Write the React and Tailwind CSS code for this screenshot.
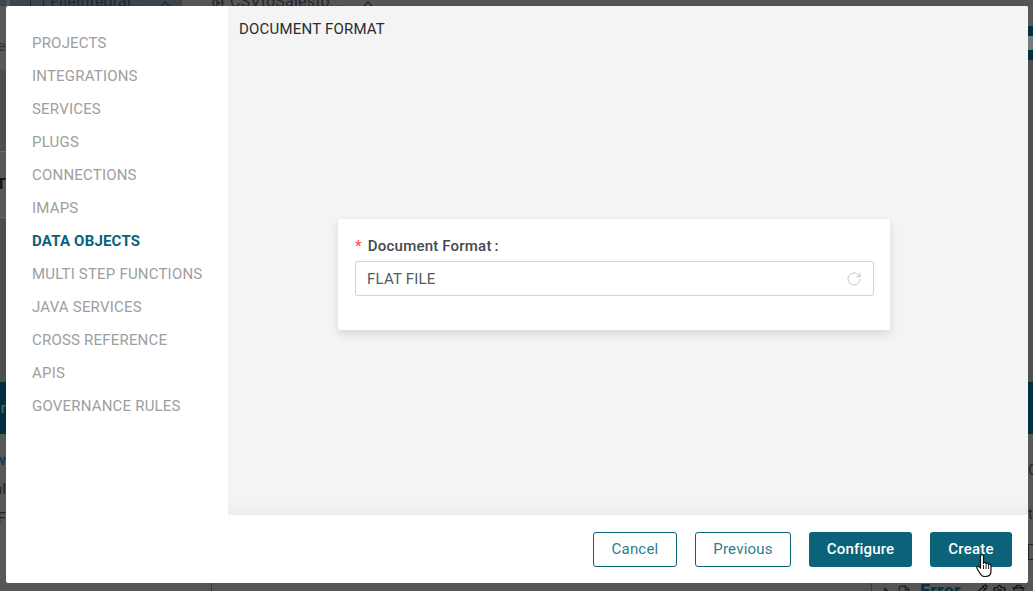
import React from 'react';
import { RotateCw, ChevronUp, Trash2, Settings, Pencil, File, Cog } from 'lucide-react';

const navItems = [
    'PROJECTS', 'INTEGRATIONS', 'SERVICES', 'PLUGS', 'CONNECTIONS', 'IMAPS',
    'DATA OBJECTS', 'MULTI STEP FUNCTIONS', 'JAVA SERVICES', 'CROSS REFERENCE', 'APIS', 'GOVERNANCE RULES',
];

const HandCursor = () => (
    <svg width="18" height="26" viewBox="0 0 18 26" className="absolute left-[975px] top-[553px]">
        <path
            d="M5.5 15V3.2c0-2 3-2 3 0V10.5c0-1.6 2.6-1.6 2.6 0v.8c0-1.5 2.5-1.5 2.5.1v.8c0-1.4 2.4-1.3 2.4.4v5.4c0 2.9-1.8 5.5-5.5 5.5H9.8c-2.4 0-3.5-1-4.6-2.8L2 15.5c-1-1.7 1.2-3 2.4-1.6z"
            fill="#fff"
            stroke="#111"
            strokeWidth="1.2"
            strokeLinejoin="round"
        />
        <path d="M8.5 12v4M11.1 12v4M13.6 12.5V16" stroke="#111" strokeWidth="0.9" />
    </svg>
);

const App = () => {
    return (
        <div className="relative h-[591px] w-[1033px] overflow-hidden bg-[#575757] font-['Roboto',sans-serif] text-[15px] tracking-[0.2px]">
            {/* Dimmed page behind the dialog */}
            <div className="flex h-full flex-col">
                <div className="flex h-[6px] overflow-hidden bg-[#555555] text-[16px] text-[#22272f]">
                    <div className="h-full w-[6px] bg-[#3c4653]" />
                    <div className="ml-[4px] flex h-full w-[172px] items-end bg-[#3d4450] pl-[20px]">
                        <span className="mb-[-3px] h-[12px] w-[14px] shrink-0 border border-[#22272f]" />
                        <span className="mb-[-4px] ml-[6px] leading-[16px] whitespace-nowrap">FileIntegral...</span>
                        <ChevronUp size={16} className="mb-[-6px] ml-[13px] shrink-0" />
                    </div>
                    <div className="ml-[29px] flex h-full items-end">
                        <Cog size={14} className="mb-[-4px] shrink-0" />
                        <span className="mb-[-4px] ml-[5px] leading-[16px] whitespace-nowrap">CSVtoSalesto...</span>
                        <ChevronUp size={16} className="mb-[-6px] ml-[17px] shrink-0" />
                    </div>
                </div>
                <div className="flex flex-1 justify-between">
                    {/* left edge */}
                    <div className="flex w-[6px] flex-col overflow-hidden whitespace-nowrap text-[#222]">
                        <div className="flex h-[64px] items-center justify-end bg-[#595959] pt-[16px] text-[#333]">e</div>
                        <div className="h-[82px] border-b border-[#6a6a6a] bg-[#4d4e50]" />
                        <div className="flex h-[66px] items-center justify-end border-b border-[#6a6a6a] bg-[#595959] font-bold text-[#111]">T</div>
                        <div className="h-[164px] bg-[#4d4e50]" />
                        <div className="flex h-[52px] items-center justify-end bg-[#03303e] text-[#5b7178]">ar</div>
                        <div className="flex h-[149px] flex-col items-end bg-[#585858] pt-[12px] leading-[29px]">
                            <span className="font-bold text-[#07414f]">w</span>
                            <span>nl</span>
                            <span>-F</span>
                        </div>
                    </div>
                    {/* right edge */}
                    <div className="flex w-[5px] flex-col overflow-hidden text-[#222]">
                        <div className="h-[20px] bg-[#585858]" />
                        <div className="flex h-[34px] items-center bg-[#03303e]">
                            <div className="h-[14px] w-[5px] bg-[#6f7d80]" />
                        </div>
                        <div className="h-[322px] bg-[#4f4f4f]" />
                        <div className="h-[52px] bg-[#03303e]" />
                        <div className="flex h-[149px] flex-col bg-[#585858] pt-[14px] leading-[44px]">
                            <span>C</span>
                            <span>t</span>
                            <div className="mt-[8px] h-[16px] w-[8px] border border-[#222]" />
                        </div>
                    </div>
                </div>
                <div className="flex h-[8px] items-start overflow-hidden bg-[#555555] pl-[211px] text-[#07313d]">
                    <div className="h-full w-px bg-[#3b3b3b]" />
                    <div className="ml-[659px] h-full w-px bg-[#3b3b3b]" />
                    <div className="mt-[4px] ml-[12px] h-0 w-0 shrink-0 border-y-[4px] border-l-[5px] border-y-transparent border-l-[#222]" />
                    <File size={14} className="mt-[2px] ml-[8px] shrink-0 text-[#222]" />
                    <span className="ml-[9px] text-[18px] leading-[16px] font-bold">Error</span>
                    <Pencil size={14} className="mt-[1px] ml-[13px] shrink-0 text-[#111]" />
                    <Settings size={15} className="mt-[1px] ml-[4px] shrink-0 text-[#111]" />
                    <Trash2 size={15} className="mt-[1px] ml-[4px] shrink-0 text-[#111]" />
                </div>
            </div>

            {/* Dialog */}
            <div className="absolute top-[6px] left-[6px] flex h-[577px] w-[1022px] overflow-hidden rounded-[2px] bg-white">
                <nav className="w-[222px] shrink-0 pt-[21px] pl-[26px] leading-[33px] text-[#9e9e9e]">
                    {navItems.map((item) => (
                        <div key={item} className={item === 'DATA OBJECTS' ? 'font-bold text-[#0a6379]' : ''}>
                            {item}
                        </div>
                    ))}
                </nav>
                <div className="flex min-w-0 flex-1 flex-col">
                    <main className="flex-1 bg-gradient-to-b from-[#f4f4f4] from-[97%] to-[#ededed] pt-[14px] pl-[11px]">
                        <h2 className="leading-[18px] font-normal text-[#2b2b2b]">DOCUMENT FORMAT</h2>
                        <section className="mt-[181px] ml-[99px] h-[111px] w-[552px] rounded-[3px] bg-white px-[17px] pt-[17px] shadow-[0_4px_10px_rgba(0,0,0,0.12)]">
                            <label className="flex h-[20px] items-center font-medium text-[#444a4f]">
                                <span className="mr-[6px] text-[#ff4d4f]">*</span>
                                Document Format<span className="ml-[3px]">:</span>
                            </label>
                            <div className="mt-[5px] flex h-[35px] w-[519px] items-center justify-between rounded-[2px] border border-[#d4d4d4] pt-[1px] pr-[11px] pl-[11px] text-[#555b60]">
                                <span>FLAT FILE</span>
                                <RotateCw size={16} strokeWidth={1.3} className="text-[#bdbdbd]" />
                            </div>
                        </section>
                    </main>
                    <footer className="flex h-[68px] shrink-0 items-center justify-end pt-[1px] pr-[16px]">
                        <button className="h-[35px] w-[84px] rounded-[3px] border border-[#0a6379] text-[#2c7d90]">Cancel</button>
                        <button className="ml-[18px] h-[35px] w-[96px] rounded-[3px] border border-[#0a6379] text-[#2c7d90]">Previous</button>
                        <button className="ml-[18px] h-[35px] w-[103px] rounded-[3px] bg-[#0a6379] font-medium text-white">Configure</button>
                        <button className="ml-[18px] h-[35px] w-[82px] rounded-[3px] bg-[#0a6379] font-medium text-white">Create</button>
                    </footer>
                </div>
            </div>
            <HandCursor />
        </div>
    );
};

export default App;
